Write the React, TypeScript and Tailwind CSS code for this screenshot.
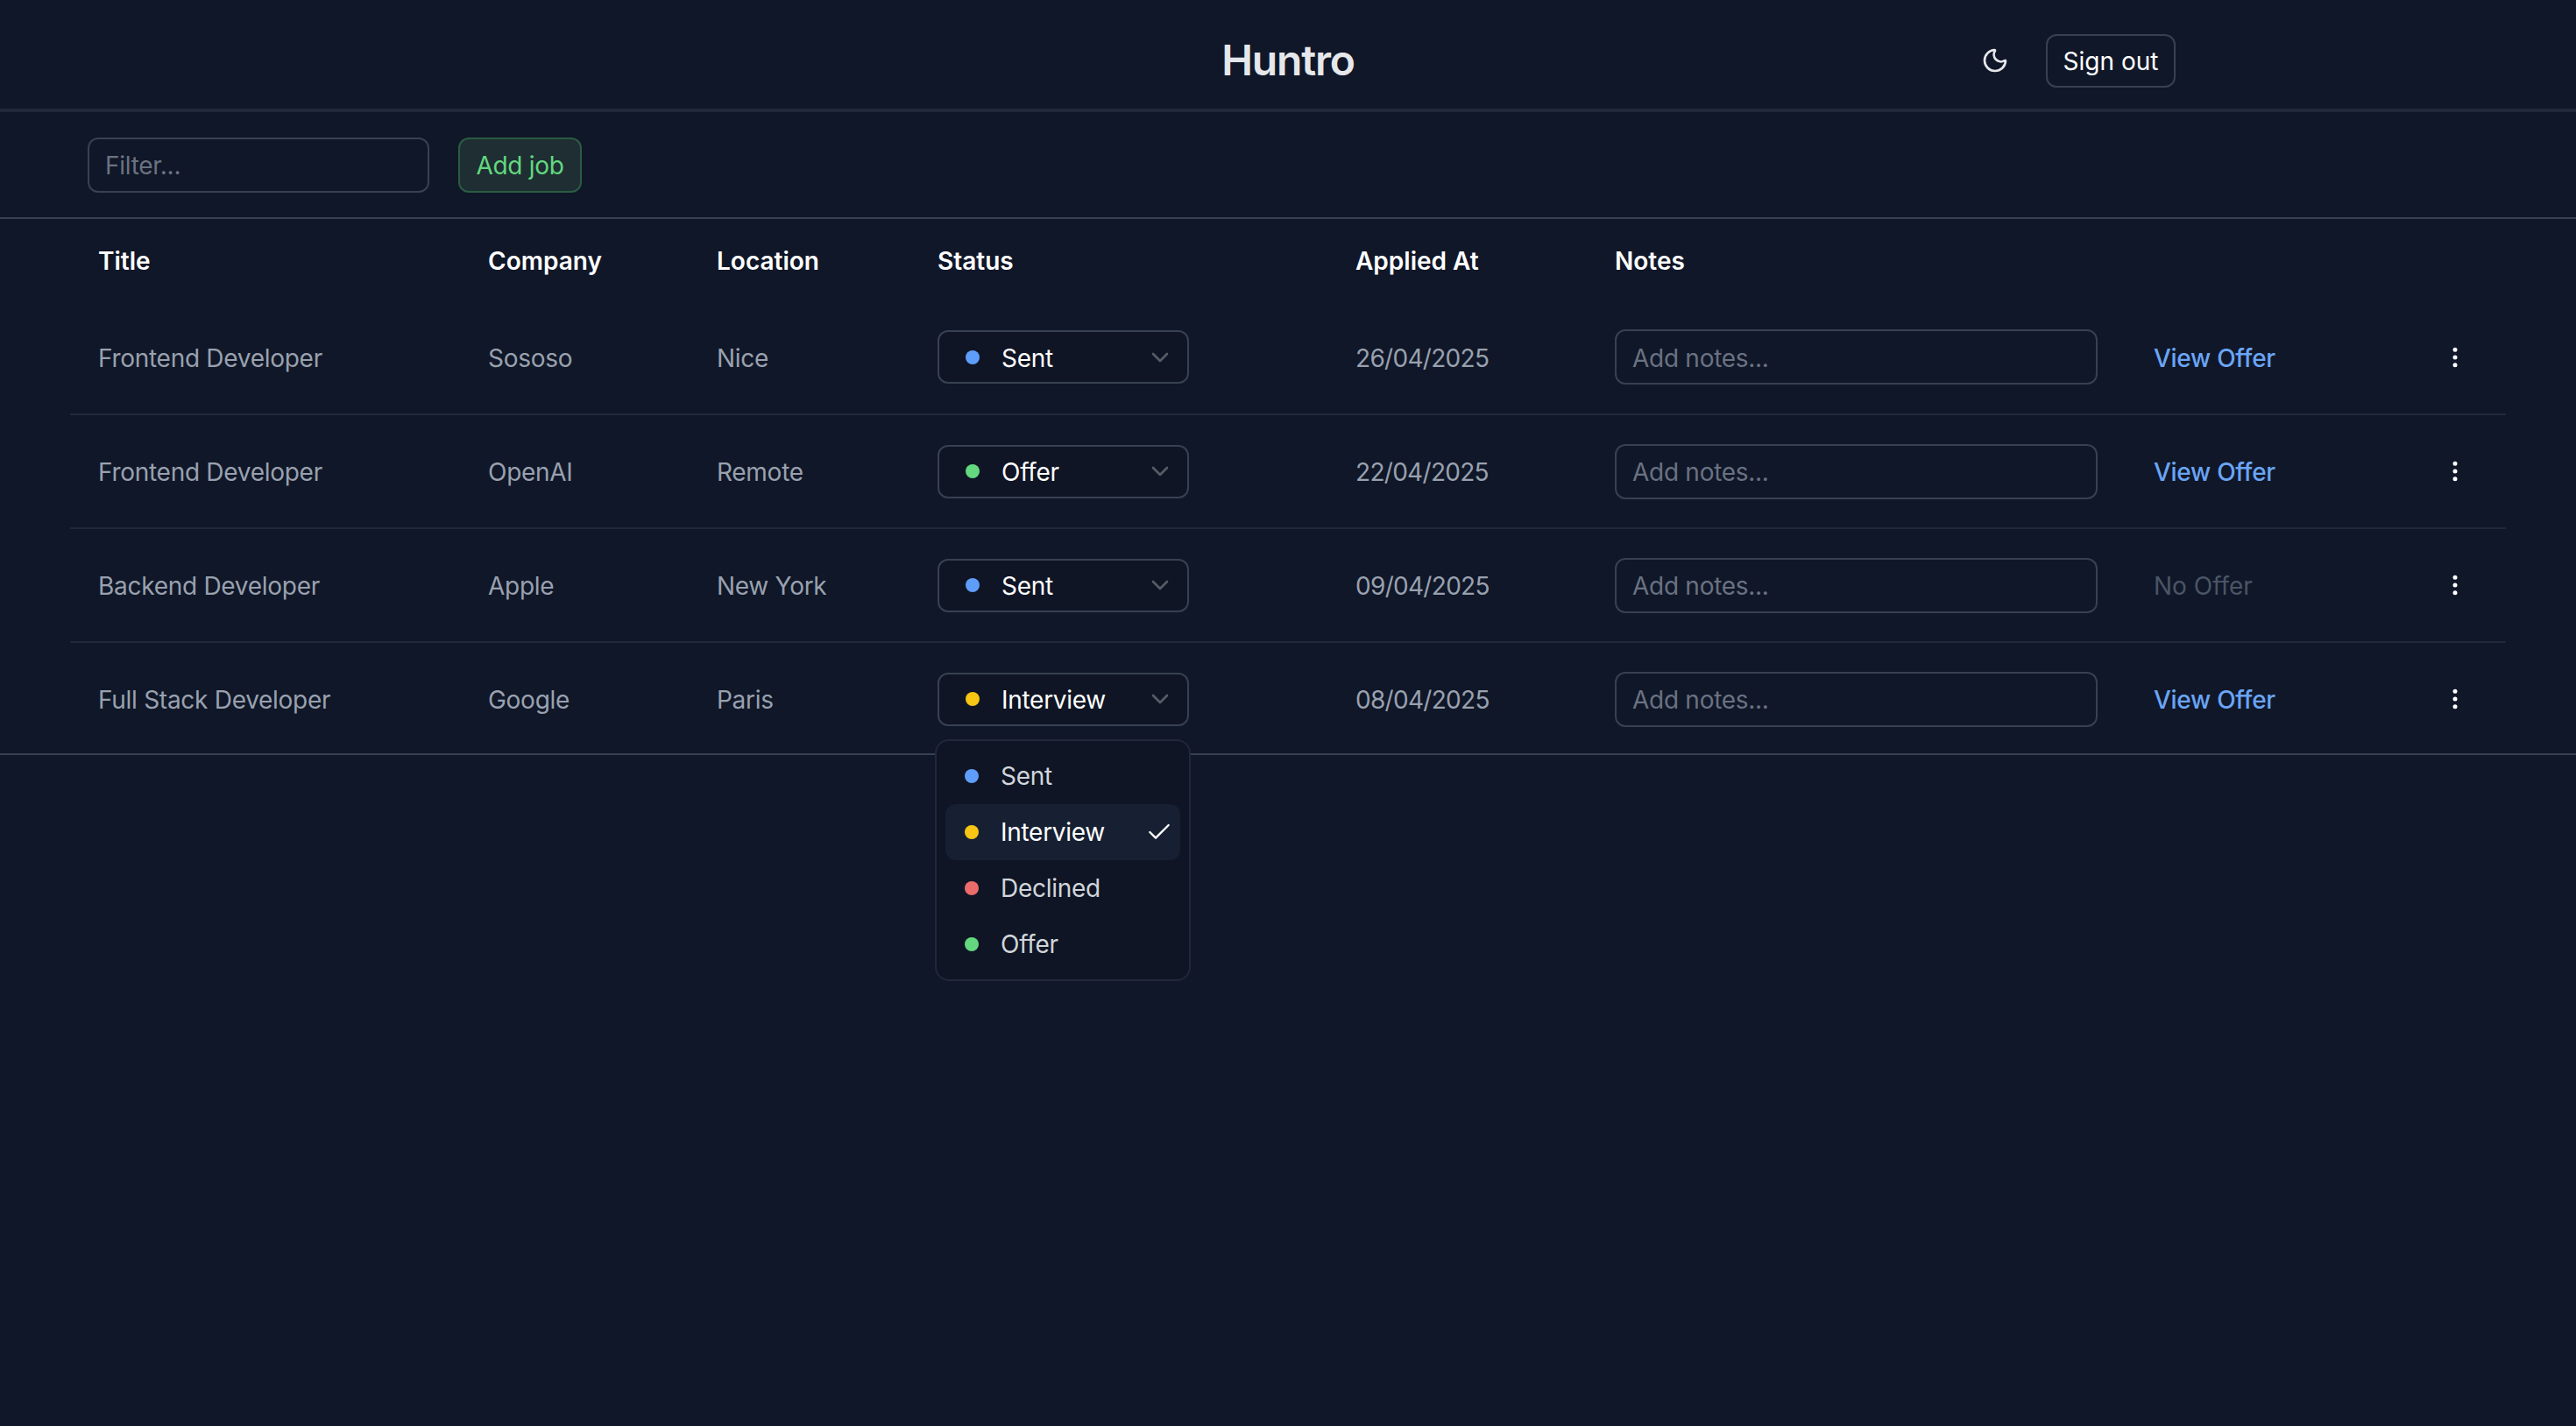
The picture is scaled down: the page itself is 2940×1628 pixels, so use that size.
import { Check, ChevronDown, EllipsisVertical, Moon } from "lucide-react"

type Status = "Sent" | "Interview" | "Declined" | "Offer"

const statusDots: Record<Status, string> = {
  Sent: "bg-[#5f9dfb]",
  Interview: "bg-[#f7c513]",
  Declined: "bg-[#ec6b6b]",
  Offer: "bg-[#63d87f]",
}

const jobs: { title: string; company: string; location: string; status: Status; applied: string; offer: boolean }[] = [
  { title: "Frontend Developer", company: "Sososo", location: "Nice", status: "Sent", applied: "26/04/2025", offer: true },
  { title: "Frontend Developer", company: "OpenAI", location: "Remote", status: "Offer", applied: "22/04/2025", offer: true },
  { title: "Backend Developer", company: "Apple", location: "New York", status: "Sent", applied: "09/04/2025", offer: false },
  { title: "Full Stack Developer", company: "Google", location: "Paris", status: "Interview", applied: "08/04/2025", offer: true },
]

const statusOptions: Status[] = ["Sent", "Interview", "Declined", "Offer"]

function StatusSelect({ status, open }: { status: Status; open?: boolean }) {
  return (
    <div className="relative w-[287px]">
      <button className="flex h-[61px] w-full items-center rounded-xl border-2 border-[#374151] bg-[#0f1524] pl-[30px] pr-[15px] text-white">
        <span className={`h-4 w-4 rounded-full ${statusDots[status]}`}></span>
        <span className="ml-[25px] flex-1 pt-[2px] text-left tracking-[-0.01em]">{status}</span>
        <ChevronDown size={32} strokeWidth={2} className="text-white/30" />
      </button>

      {/* Open dropdown */}
      {open && (
        <div className="absolute left-[-3px] top-[76px] z-10 w-[292px] rounded-2xl border-2 border-[#20283a] bg-[#0f1524] px-[10px] py-[8px]">
          {statusOptions.map((option) => (
            <div
              key={option}
              className={`flex h-[64px] items-center pl-[22px] pr-[8px] ${
                option === status ? "rounded-xl bg-[#172033] text-white" : "text-[#d1d5dc]"
              }`}
            >
              <span className={`h-4 w-4 rounded-full ${statusDots[option]}`}></span>
              <span className="ml-[25px] flex-1 tracking-[-0.01em]">{option}</span>
              {option === status && <Check size={32} strokeWidth={1.75} className="text-white" />}
            </div>
          ))}
        </div>
      )}
    </div>
  )
}

export default function App() {
  return (
    <div className="min-h-[1628px] bg-[#101728] text-[28px] font-['Inter',sans-serif] text-[#99a1af]">
      {/* Header */}
      <header className="grid h-[128px] grid-cols-3 items-center border-b-4 border-[#20283a] pt-[14px]">
        <div></div>
        <h1 className="text-center text-[48px] font-semibold tracking-tight text-[#e5e7eb]">Huntro</h1>
        <div className="flex items-center justify-end gap-[42px] pr-[457px]">
          <Moon size={32} className="text-[#e5e7eb]" />
          <button className="h-[61px] w-[148px] rounded-xl border-2 border-[#374151] pt-[2px] text-white">Sign out</button>
        </div>
      </header>

      {/* Toolbar */}
      <div className="flex h-[122px] items-center gap-[33px] border-b-2 border-[#374151] pl-[100px]">
        <input
          placeholder="Filter..."
          className="h-[63px] w-[390px] rounded-xl border-2 border-[#374151] px-[18px] pt-[2px] tracking-[-0.01em] outline-none placeholder:text-[#6a7282]"
        />
        <button className="h-[63px] w-[141px] rounded-xl border-2 border-[#2a5c41] bg-[#1e2e33] pt-[2px] tracking-[-0.01em] text-[#63d87f]">
          Add job
        </button>
      </div>

      {/* Jobs table */}
      <div className="border-b-2 border-[#374151] px-[80px]">
        <table className="w-[2780px] table-fixed text-left">
          <thead>
            <tr className="h-[93px] text-white">
              <th className="w-[445px] pl-[32px] pt-[2px] font-semibold">Title</th>
              <th className="w-[261px] pl-[32px] pt-[2px] font-semibold">Company</th>
              <th className="w-[252px] pl-[32px] pt-[2px] font-semibold">Location</th>
              <th className="w-[477px] pl-[32px] pt-[2px] font-semibold">Status</th>
              <th className="w-[296px] pl-[32px] pt-[2px] font-semibold">Applied At</th>
              <th className="w-[615px] pl-[32px] pt-[2px] font-semibold">Notes</th>
              <th className="w-[304px]"></th>
              <th></th>
            </tr>
          </thead>
          <tbody>
            {jobs.map((job, index) => {
              const isLast = index === jobs.length - 1
              // last row sits 2px lower: it has no bottom border of its own
              const textCell = isLast ? "pl-[32px] pt-[4px]" : "pl-[32px] pt-[2px]"
              const boxCell = isLast ? "pt-[2px]" : ""

              return (
                <tr key={index} className={isLast ? "h-[127px]" : "h-[130px] border-b-2 border-[#20283a]"}>
                  <td className={`${textCell} tracking-[-0.01em]`}>{job.title}</td>
                  <td className={`${textCell} tracking-[-0.01em]`}>{job.company}</td>
                  <td className={`${textCell} tracking-[-0.01em]`}>{job.location}</td>
                  <td className={`${boxCell} pl-[32px]`}>
                    <StatusSelect status={job.status} open={job.status === "Interview"} />
                  </td>
                  <td className={`${textCell} tracking-[-0.025em]`}>{job.applied}</td>
                  <td className={`${boxCell} px-[32px]`}>
                    <input
                      placeholder="Add notes..."
                      className="h-[63px] w-full rounded-xl border-2 border-[#374151] px-[18px] pt-[2px] tracking-[-0.01em] outline-none placeholder:text-[#6a7282]"
                    />
                  </td>
                  <td className={textCell}>
                    {job.offer ? (
                      <a className="font-medium tracking-[-0.01em] text-[#6aa5f5]">View Offer</a>
                    ) : (
                      <span className="text-[#4a5565]">No Offer</span>
                    )}
                  </td>
                  <td className={boxCell}>
                    <EllipsisVertical size={30} className="ml-[57px] text-white" />
                  </td>
                </tr>
              )
            })}
          </tbody>
        </table>
      </div>
    </div>
  )
}
